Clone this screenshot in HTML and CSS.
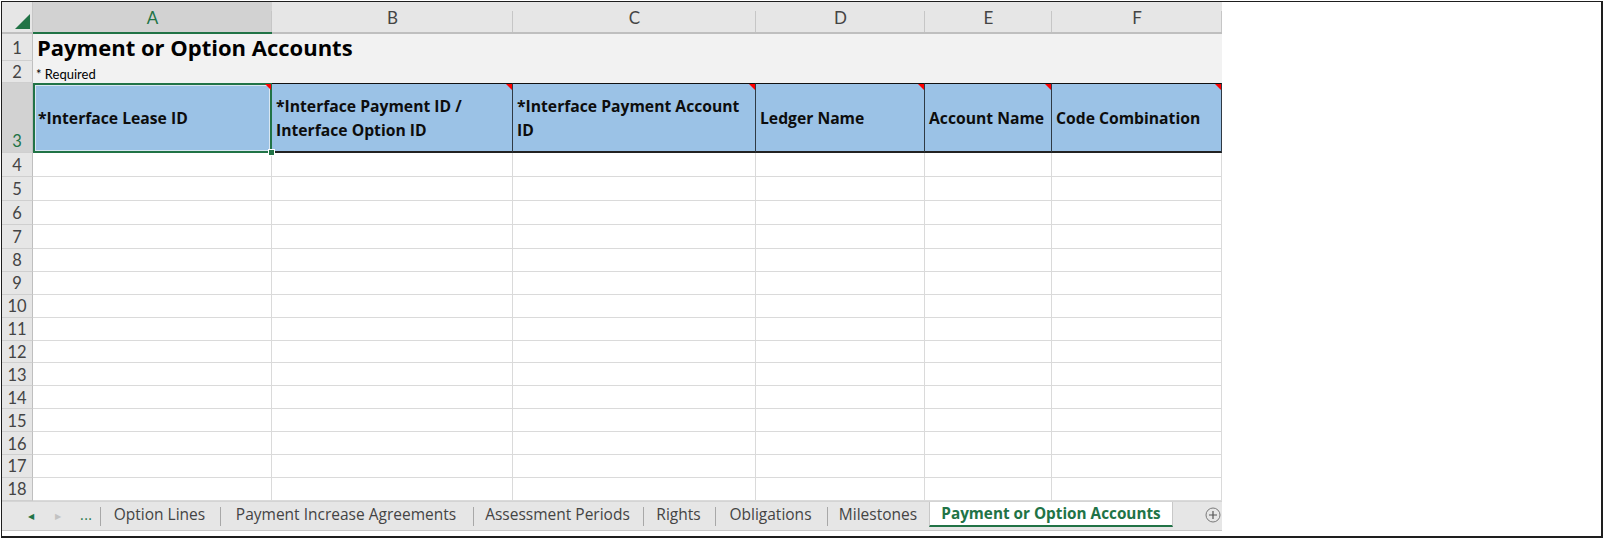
FILE: index.html
```html
<!DOCTYPE html>
<html lang="en">
<head>
    <meta charset="UTF-8">
    <meta name="viewport" content="width=device-width, initial-scale=1.0">
    <title>Payment or Option Accounts</title>
    <link rel="stylesheet" href="styles.css">
</head>
<body>
    <div class="frame">
        <div class="sheet">
            <div class="grid">
                <!-- column headers -->
                <div class="corner">
                    <svg width="16" height="16" viewBox="0 0 16 16"><polygon points="15,0 15,15 0,15" fill="#217346"/></svg>
                </div>
                <div class="col-head active">A</div>
                <div class="col-head">B</div>
                <div class="col-head">C</div>
                <div class="col-head">D</div>
                <div class="col-head">E</div>
                <div class="col-head">F</div>

                <!-- rows 1 and 2 -->
                <div class="row-head">1</div>
                <div class="title-cell">Payment or Option Accounts</div>
                <div class="row-head">2</div>
                <div class="note-cell">* Required</div>

                <!-- row 3: field headers -->
                <div class="row-head current">3</div>
                <div class="hdr selected"><span>*Interface Lease ID</span><i class="comment"></i><i class="handle"></i></div>
                <div class="hdr"><span>*Interface Payment ID /<br>Interface Option ID</span><i class="comment"></i></div>
                <div class="hdr"><span>*Interface Payment Account<br>ID</span><i class="comment"></i></div>
                <div class="hdr"><span>Ledger Name</span><i class="comment"></i></div>
                <div class="hdr"><span>Account Name</span><i class="comment"></i></div>
                <div class="hdr"><span>Code Combination</span><i class="comment"></i></div>

                <!-- empty rows -->
                <div class="row-head">4</div><div class="cell"></div><div class="cell"></div><div class="cell"></div><div class="cell"></div><div class="cell"></div><div class="cell"></div>
                <div class="row-head">5</div><div class="cell"></div><div class="cell"></div><div class="cell"></div><div class="cell"></div><div class="cell"></div><div class="cell"></div>
                <div class="row-head">6</div><div class="cell"></div><div class="cell"></div><div class="cell"></div><div class="cell"></div><div class="cell"></div><div class="cell"></div>
                <div class="row-head">7</div><div class="cell"></div><div class="cell"></div><div class="cell"></div><div class="cell"></div><div class="cell"></div><div class="cell"></div>
                <div class="row-head">8</div><div class="cell"></div><div class="cell"></div><div class="cell"></div><div class="cell"></div><div class="cell"></div><div class="cell"></div>
                <div class="row-head">9</div><div class="cell"></div><div class="cell"></div><div class="cell"></div><div class="cell"></div><div class="cell"></div><div class="cell"></div>
                <div class="row-head">10</div><div class="cell"></div><div class="cell"></div><div class="cell"></div><div class="cell"></div><div class="cell"></div><div class="cell"></div>
                <div class="row-head">11</div><div class="cell"></div><div class="cell"></div><div class="cell"></div><div class="cell"></div><div class="cell"></div><div class="cell"></div>
                <div class="row-head">12</div><div class="cell"></div><div class="cell"></div><div class="cell"></div><div class="cell"></div><div class="cell"></div><div class="cell"></div>
                <div class="row-head">13</div><div class="cell"></div><div class="cell"></div><div class="cell"></div><div class="cell"></div><div class="cell"></div><div class="cell"></div>
                <div class="row-head">14</div><div class="cell"></div><div class="cell"></div><div class="cell"></div><div class="cell"></div><div class="cell"></div><div class="cell"></div>
                <div class="row-head">15</div><div class="cell"></div><div class="cell"></div><div class="cell"></div><div class="cell"></div><div class="cell"></div><div class="cell"></div>
                <div class="row-head">16</div><div class="cell"></div><div class="cell"></div><div class="cell"></div><div class="cell"></div><div class="cell"></div><div class="cell"></div>
                <div class="row-head">17</div><div class="cell"></div><div class="cell"></div><div class="cell"></div><div class="cell"></div><div class="cell"></div><div class="cell"></div>
                <div class="row-head">18</div><div class="cell"></div><div class="cell"></div><div class="cell"></div><div class="cell"></div><div class="cell"></div><div class="cell"></div>
            </div>

            <!-- sheet tabs -->
            <div class="tab-bar">
                <div class="tab-nav">
                    <span class="nav-prev">&#9664;</span>
                    <span class="nav-next">&#9654;</span>
                    <span class="nav-more">...</span>
                </div>
                <div class="tab" style="width: 119px">Option Lines</div>
                <div class="tab" style="width: 252px">Payment Increase Agreements</div>
                <div class="tab" style="width: 169px">Assessment Periods</div>
                <div class="tab" style="width: 71px">Rights</div>
                <div class="tab" style="width: 111px">Obligations</div>
                <div class="tab last" style="width: 102px">Milestones</div>
                <div class="tab active" style="width: 242px">Payment or Option Accounts</div>
                <div class="tab-add">
                    <svg width="16" height="16" viewBox="0 0 16 16">
                        <circle cx="8" cy="8" r="7" fill="none" stroke="#7a7a7a" stroke-width="1"/>
                        <path d="M8 4v8M4 8h8" stroke="#555" stroke-width="1.2"/>
                    </svg>
                </div>
            </div>
        </div>
    </div>
</body>
</html>
```

FILE: styles.css
```css
body {
    margin: 0;
    background: #fff;
    font-family: "Lato", "Liberation Sans", sans-serif;
}
.frame {
    width: 1599px;
    height: 534px;
    margin: 1px 0 0 1px;
    border: 1px solid #1e1e1e;
    border-right-width: 2px;
    border-bottom-width: 2px;
    box-sizing: content-box;
}
.sheet {
    width: 1220px;
    height: 534px;
    display: flex;
    flex-direction: column;
    background: #fff;
}
.grid {
    display: grid;
    grid-template-columns: 31px 239px 241px 243px 169px 127px 170px;
    grid-template-rows: 32px 27px 22px 70px repeat(4, 24px) repeat(11, 22.9px);
}
.grid > div {
    box-sizing: border-box;
    position: relative;
}
.corner {
    background: #e6e6e6;
    border-bottom: 2px solid #bfbfbf;
    border-right: 1px solid #c6c6c6;
    display: flex;
    align-items: flex-end;
    justify-content: flex-end;
    padding: 0 1px 2px 0;
}
.col-head {
    background: #e6e6e6;
    border-bottom: 2px solid #bfbfbf;
    color: #444;
    font-size: 17px;
    text-align: center;
    line-height: 31px;
}
.col-head::after {
    content: "";
    position: absolute;
    right: 0;
    top: 9px;
    bottom: 0;
    width: 1px;
    background: #c6c6c6;
}
.col-head.active {
    background: #d2d2d2;
    border-bottom-color: #217346;
    color: #217346;
}
.row-head {
    background: #e6e6e6;
    border-right: 1px solid #bfbfbf;
    border-bottom: 1px solid #cfcfcf;
    color: #444;
    font-size: 16.5px;
    display: flex;
    align-items: center;
    justify-content: center;
    padding-top: 2px;
    line-height: 21px;
}
.row-head.current {
    background: #d2d2d2;
    color: #217346;
    align-items: flex-end;
    padding-top: 0;
}
.title-cell {
    grid-column: span 6;
    background: #f2f2f2;
    font-family: "Open Sans", "Noto Sans", sans-serif;
    font-size: 22px;
    font-weight: 700;
    color: #000;
    padding: 0 0 0 4px;
    line-height: 26px;
}
.note-cell {
    grid-column: span 6;
    background: #f2f2f2;
    font-size: 13px;
    color: #000;
    padding: 5px 0 0 3px;
}
.hdr {
    background: #9bc2e6;
    border-top: 1px solid #111;
    border-bottom: 2px solid #222;
    border-right: 1px solid #2f3a44;
    font-family: "Open Sans", "Noto Sans", sans-serif;
    font-size: 15.7px;
    font-weight: 700;
    color: #0d0d0d;
    display: flex;
    align-items: center;
    padding: 0 0 0 4px;
    line-height: 24px;
}
.hdr.selected {
    border: 2px solid #217346;
    box-shadow: inset 0 0 0 1px #d8e6f2;
    padding-left: 3px;
}
.comment {
    position: absolute;
    top: 0;
    right: 0;
    width: 0;
    height: 0;
    border-top: 6px solid #ff0000;
    border-left: 6px solid transparent;
}
.hdr.selected .comment {
    top: -1px;
    right: -1px;
}
.handle {
    position: absolute;
    right: -5px;
    bottom: -5px;
    width: 7px;
    height: 7px;
    background: #217346;
    border: 1px solid #fff;
    box-sizing: border-box;
    z-index: 2;
}
.cell {
    border-right: 1px solid #dadada;
    border-bottom: 1px solid #dadada;
}
.tab-bar {
    display: flex;
    align-items: stretch;
    height: 30px;
    background: #e6e6e6;
    border-top: 1px solid #d4d4d4;
    border-bottom: 1px solid #c8c8c8;
    box-sizing: border-box;
    font-family: "Open Sans", "Noto Sans", sans-serif;
    font-size: 15.5px;
    color: #444;
}
.tab-nav {
    width: 97px;
    display: flex;
    align-items: center;
    padding-left: 26px;
    box-sizing: border-box;
}
.nav-prev {
    color: #217346;
    font-size: 8px;
    width: 27px;
}
.nav-next {
    color: #c2c2c2;
    font-size: 8px;
    width: 25px;
}
.nav-more {
    color: #217346;
    font-size: 14px;
    letter-spacing: 0.5px;
    padding-bottom: 3px;
}
.tab {
    display: flex;
    align-items: center;
    justify-content: center;
    padding-bottom: 3px;
    border-left: 1px solid transparent;
    background-image: linear-gradient(#a8a8a8, #a8a8a8);
    background-size: 1px 19px;
    background-position: left 5px;
    background-repeat: no-repeat;
    white-space: nowrap;
}
.tab.active {
    background: #fff;
    border-left: 1px solid #c8c8c8;
    border-right: 1px solid #c8c8c8;
    border-bottom: 2px solid #217346;
    color: #217346;
    font-weight: 700;
    font-size: 15.3px;
    padding-bottom: 1px;
    margin-bottom: 3px;
}
.tab-add {
    flex: 1;
    display: flex;
    align-items: center;
    justify-content: flex-end;
    padding: 0 1px 2px 0;
}
```
